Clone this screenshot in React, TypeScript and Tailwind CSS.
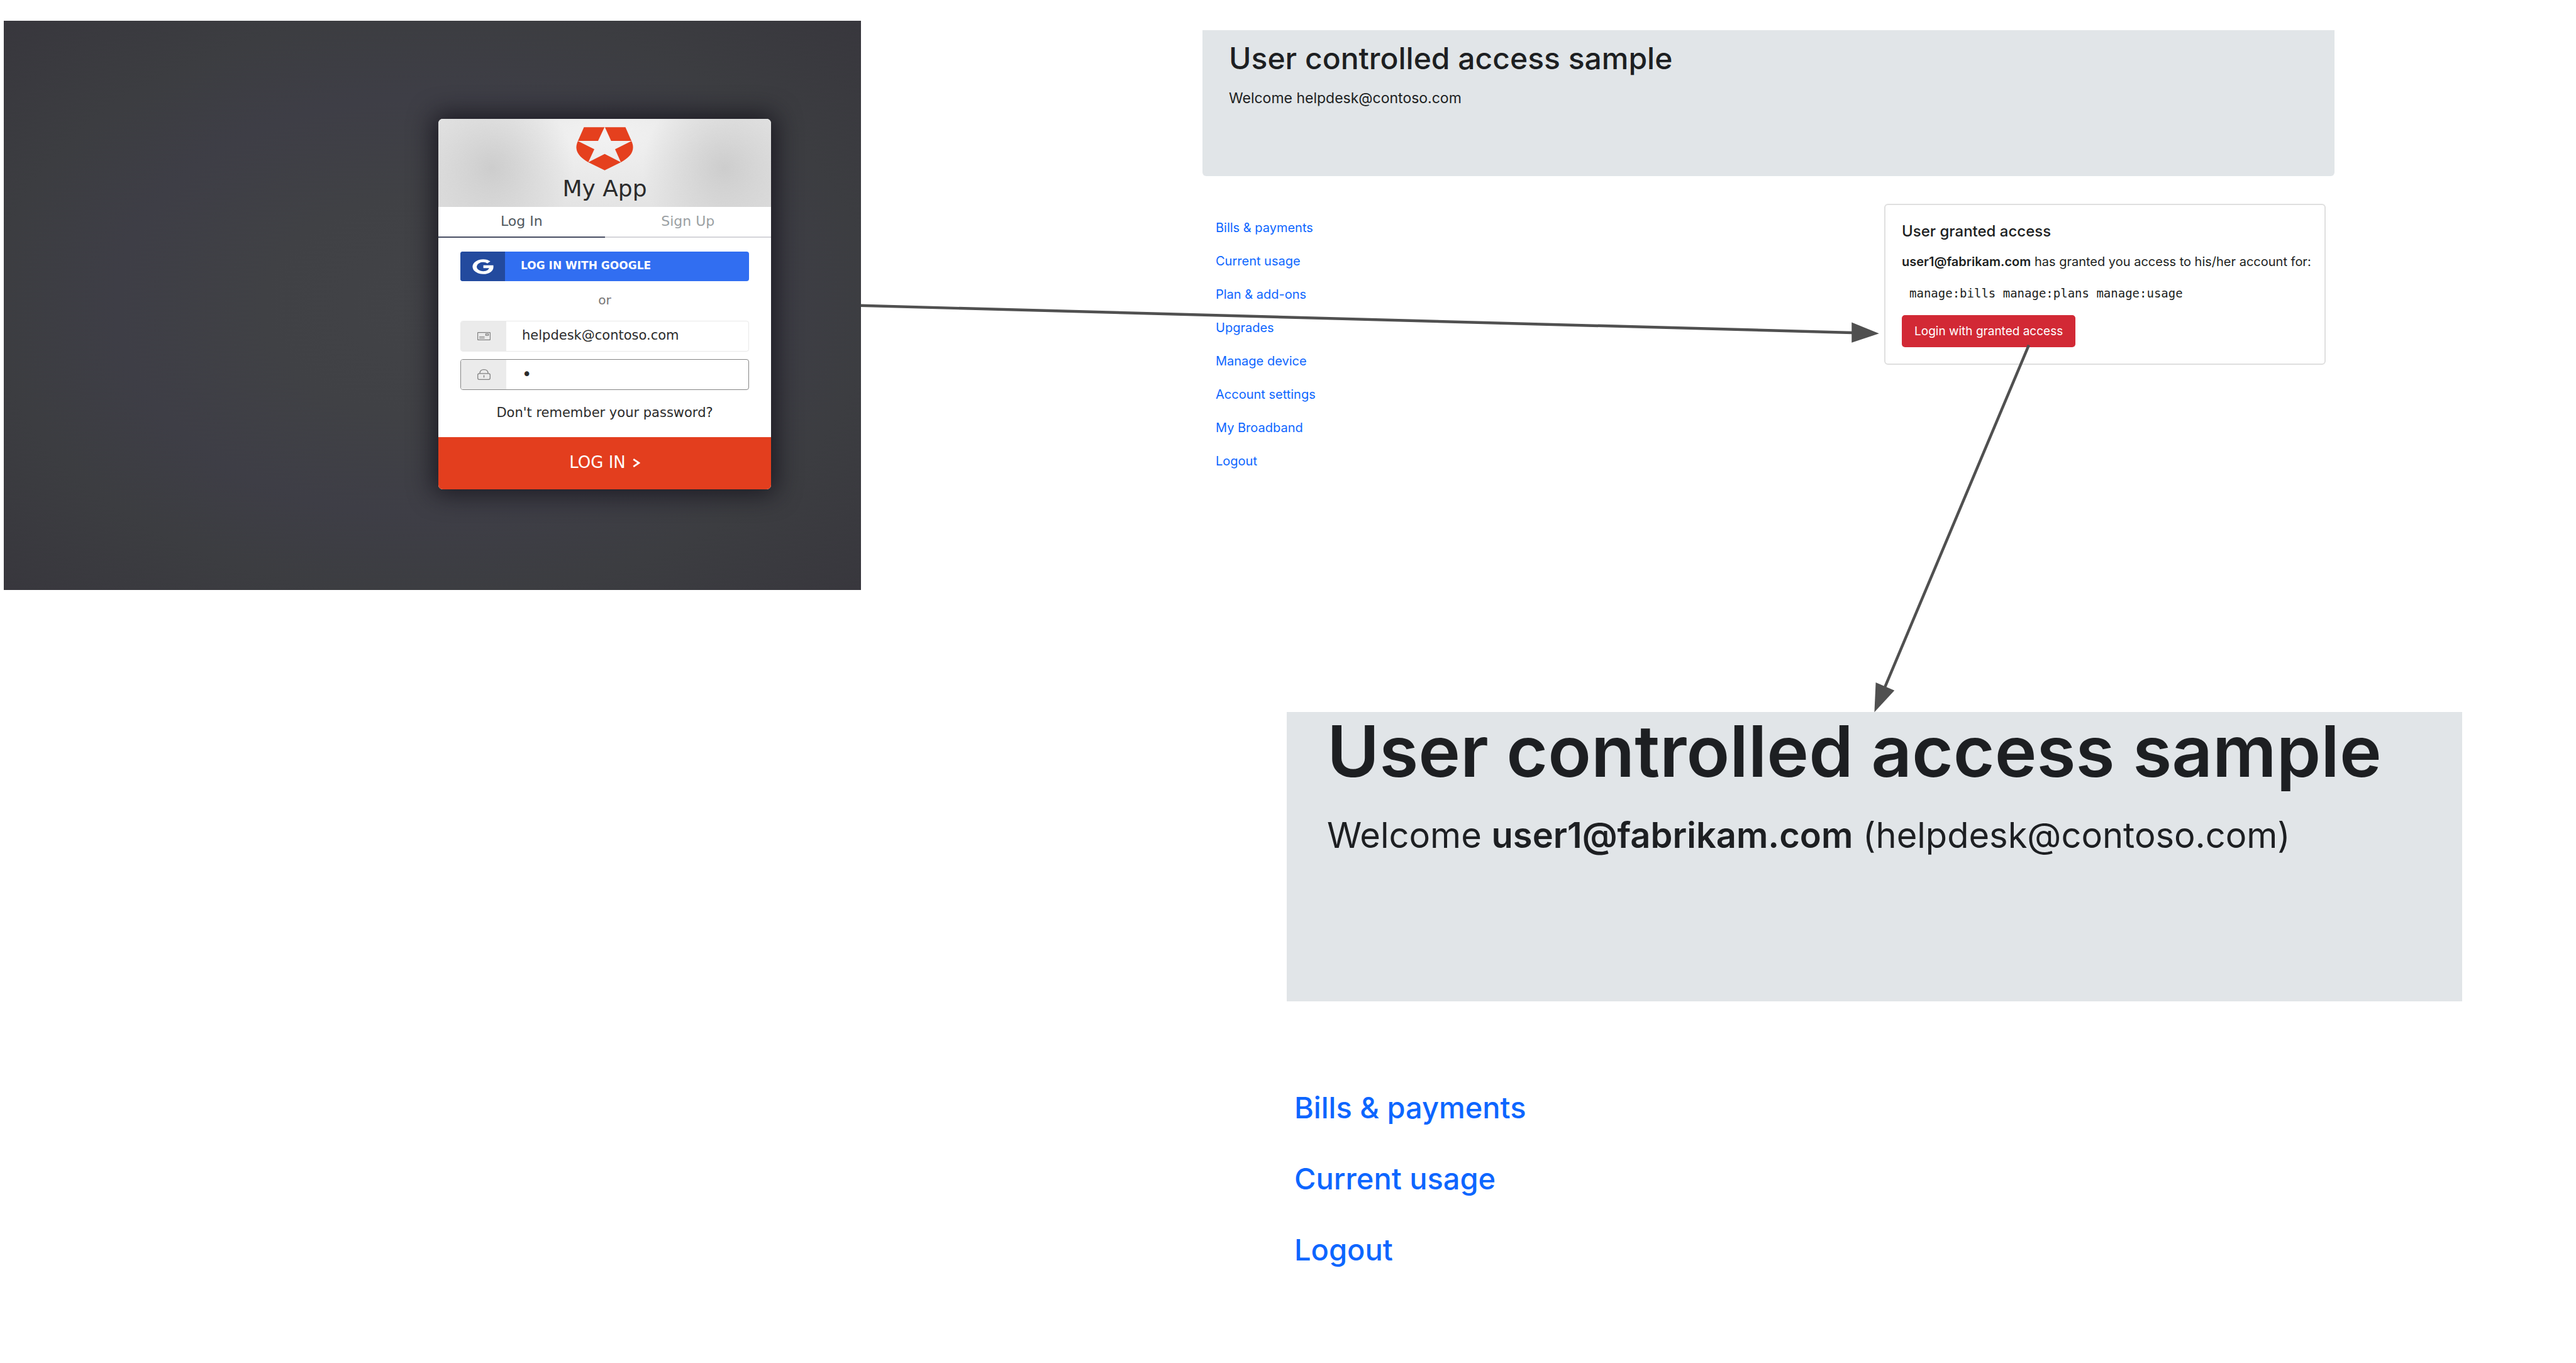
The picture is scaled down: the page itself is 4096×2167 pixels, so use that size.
import React from "react";

const customerLinks = [
  "Bills & payments",
  "Current usage",
  "Plan & add-ons",
  "Upgrades",
  "Manage device",
  "Account settings",
  "My Broadband",
  "Logout",
];

const delegatedLinks = ["Bills & payments", "Current usage", "Logout"];

function ShieldLogo() {
  return (
    <svg viewBox="75 42 276 208" className="h-[69px] w-[91px] fill-[#e5401e]" aria-hidden="true">
      <path d="M113 42H212L181 108H84Z" />
      <path d="M214 42H313L342 108H244Z" />
      <path d="M84 109L163 148L134 211C84 184 64 150 84 109Z" />
      <path d="M342 109L263 148L291 211C342 184 362 150 342 109Z" />
      <path d="M213 171L291 211L213 250L134 211Z" />
    </svg>
  );
}

function GoogleIcon() {
  return (
    <svg
      viewBox="0 0 24 24"
      preserveAspectRatio="none"
      className="h-6 w-[34px] fill-none stroke-white"
      aria-hidden="true"
    >
      <path d="M18.6 5.2C16.9 3.4 14.7 2.5 12.2 2.5C6.8 2.5 2.6 6.7 2.6 12S6.8 21.5 12.2 21.5C17.8 21.5 21.6 17.6 21.4 12H12.4" strokeWidth="4.6" />
    </svg>
  );
}

function MailIcon() {
  return (
    <svg viewBox="0 0 21 13" className="h-[13px] w-[21px] fill-none stroke-[#808080]" aria-hidden="true">
      <rect x=".6" y=".6" width="19.8" height="11.8" rx=".6" strokeWidth="1.2" />
      <rect x="13.4" y="2.8" width="4.2" height="2.4" strokeWidth="1.2" />
      <path d="M3 7.4H11.6M3 9.6H11.6" strokeWidth="1" />
    </svg>
  );
}

function LockIcon() {
  return (
    <svg viewBox="0 0 21 17" className="h-[17px] w-[21px] fill-none stroke-[#808080]" aria-hidden="true">
      <rect x=".7" y="6.8" width="19.6" height="9.5" rx="2.4" strokeWidth="1.3" />
      <path d="M4 6.8C4 2.8 6.4 .7 10.5 .7S17 2.8 17 6.8" strokeWidth="1.3" />
      <path d="M10.5 9.6V13.2" strokeWidth="1.4" />
    </svg>
  );
}

function LoginWidget() {
  return (
    <form
      className="col-start-2 overflow-hidden rounded-[7px] bg-white text-[21px] text-[#2b2b2b] shadow-[0_0_38px_8px_rgba(18,15,24,0.75)]"
      onSubmit={(e) => e.preventDefault()}
    >
      <header className="flex h-[140px] flex-col items-center bg-[radial-gradient(circle_at_16%_56%,#cdcdcd_0,rgba(205,205,205,0)_130px),radial-gradient(circle_at_86%_56%,#cdcdcd_0,rgba(205,205,205,0)_130px),radial-gradient(ellipse_at_50%_20%,#f2f2f2_0,#e9e9e9_45%,#dedede_100%)] pt-[13px]">
        <ShieldLogo />
        <h1 className="mt-[7px] text-[36px] leading-[44px]">My App</h1>
      </header>

      <div className="grid h-[49px] grid-cols-2 text-[22px]">
        <button type="button" className="border-b-2 border-[#474d62] pb-0.5 text-[#4f585e]">
          Log In
        </button>
        <button type="button" className="border-b-2 border-[#d4d5d9] pb-0.5 text-[#9a9fa3]">
          Sign Up
        </button>
      </div>

      <div className="px-[35px] pt-[22px]">
        <button
          type="button"
          className="flex h-[47px] w-full overflow-hidden rounded-[4px] bg-[#316ef1] text-[17px] font-bold text-white"
        >
          <span className="flex h-full w-[71px] items-center justify-center bg-[#234a9e]">
            <GoogleIcon />
          </span>
          <span className="self-center pb-0.5 pl-[25px]">LOG IN WITH GOOGLE</span>
        </button>

        <p className="h-[63px] text-center text-[20px] leading-[61px] text-[#767676]">or</p>

        <label className="flex h-[49px] overflow-hidden rounded-[4px] border border-[#e9e9e9]">
          <span className="flex w-[72px] items-center justify-center bg-[#ebebeb]">
            <MailIcon />
          </span>
          <input
            type="email"
            aria-label="Email"
            defaultValue="helpdesk@contoso.com"
            className="min-w-0 flex-1 pb-0.5 pl-[25px] outline-none"
          />
        </label>

        <label className="mt-3 flex h-[49px] overflow-hidden rounded-[4px] border border-[#858585]">
          <span className="flex w-[72px] items-center justify-center bg-[#ebebeb]">
            <LockIcon />
          </span>
          <input
            type="password"
            aria-label="Password"
            defaultValue="x"
            className="min-w-0 flex-1 pl-[25px] text-[26px] outline-none"
          />
        </label>

        <p className="h-[75px] text-center leading-[73px]">
          <a href="#reset">Don't remember your password?</a>
        </p>
      </div>

      <button
        type="submit"
        className="flex h-[83px] w-full items-center justify-center gap-[11px] bg-[#e33e1e] pb-0.5 text-[26px] text-white"
      >
        LOG IN
        <svg viewBox="0 0 12 14" className="h-[14px] w-3 fill-none stroke-white" aria-hidden="true">
          <path d="M1.2 1.2L9.8 7L1.2 12.8" strokeWidth="2.8" />
        </svg>
      </button>
    </form>
  );
}

function GrantedAccessCard() {
  return (
    <aside className="mt-[44px] mr-[14px] w-[39%] rounded-[6px] border-2 border-[#dfdfdf] px-[26px] pt-[27px] pb-[26px] text-[20px] leading-[30px] whitespace-nowrap">
      <h2 className="text-[24px] leading-[30px] font-medium">User granted access</h2>
      <p className="mt-[18px]">
        <b className="font-semibold">user1@fabrikam.com</b> has granted you access to his/her account for:
      </p>
      <p className="mt-5 pl-3 font-['DejaVu_Sans_Mono',monospace] text-[19px]">
        manage:bills manage:plans manage:usage
      </p>
      <button type="button" className="mt-5 h-[51px] rounded-[5px] bg-[#d22935] px-5 text-[19px] text-white">
        Login with granted access
      </button>
    </aside>
  );
}

function FlowArrows() {
  return (
    <svg
      viewBox="0 0 4136 2188"
      className="pointer-events-none absolute inset-0 h-full w-full fill-[#505050] stroke-[#505050]"
      aria-hidden="true"
    >
      <path d="M1382 490.5L2974 534" strokeWidth="4.5" />
      <path d="M2973 517.5L3017 535.3L2973 550Z" stroke="none" />
      <path d="M3257.5 554L3026 1104" strokeWidth="4.5" />
      <path d="M3011.7 1095.4L3041.7 1108.3L3009.5 1143.3Z" stroke="none" />
    </svg>
  );
}

export default function App() {
  return (
    <div className="relative min-h-screen bg-white font-['Inter',sans-serif] text-[#1d1f22]">
      <main className="grid grid-cols-[1363fr_2727fr] items-start pl-[6px]">
        <section className="mt-[33px] grid grid-cols-[691fr_529fr_143fr] bg-[radial-gradient(ellipse_at_center,#424347_0,#404145_28%,#3e3e46_52%,#3c3d41_72%,#38373d_100%)] pt-[156px] pb-[160px] font-['DejaVu_Sans',sans-serif]">
          <LoginWidget />
        </section>

        <div>
          <section className="grid grid-cols-[543fr_1800fr_384fr] pt-[48px]">
            <div className="col-start-2">
              <header className="h-[232px] rounded-b-[6px] bg-[#e1e5e8] px-[42px] pt-4">
                <h1 className="text-[48px] leading-[58px] font-medium">User controlled access sample</h1>
                <p className="mt-4 text-[23px] leading-[36px]">Welcome helpdesk@contoso.com</p>
              </header>
              <div className="flex items-start justify-between">
                <nav className="mt-[56px] flex flex-col pl-[21px] text-[20px] leading-[53px] text-[#0d66ff]">
                  {customerLinks.map((label) => (
                    <a key={label} href="#account">
                      {label}
                    </a>
                  ))}
                </nav>
                <GrantedAccessCard />
              </div>
            </div>
          </section>

          <section className="mt-[372px] grid grid-cols-[677fr_1869fr_181fr]">
            <div className="col-start-2">
              <header className="h-[460px] bg-[#e1e5e8] px-16 pt-0.5">
                <h1 className="text-[113px] leading-[120px] font-semibold">User controlled access sample</h1>
                <p className="mt-[34px] text-[56px] leading-[80px]">
                  Welcome <b className="font-semibold">user1@fabrikam.com</b> (helpdesk@contoso.com)
                </p>
              </header>
              <nav className="mt-[112px] flex flex-col pl-3 text-[47px] leading-[113px] font-medium text-[#0d66ff]">
                {delegatedLinks.map((label) => (
                  <a key={label} href="#delegated">
                    {label}
                  </a>
                ))}
              </nav>
            </div>
          </section>
        </div>
      </main>
      <FlowArrows />
    </div>
  );
}
